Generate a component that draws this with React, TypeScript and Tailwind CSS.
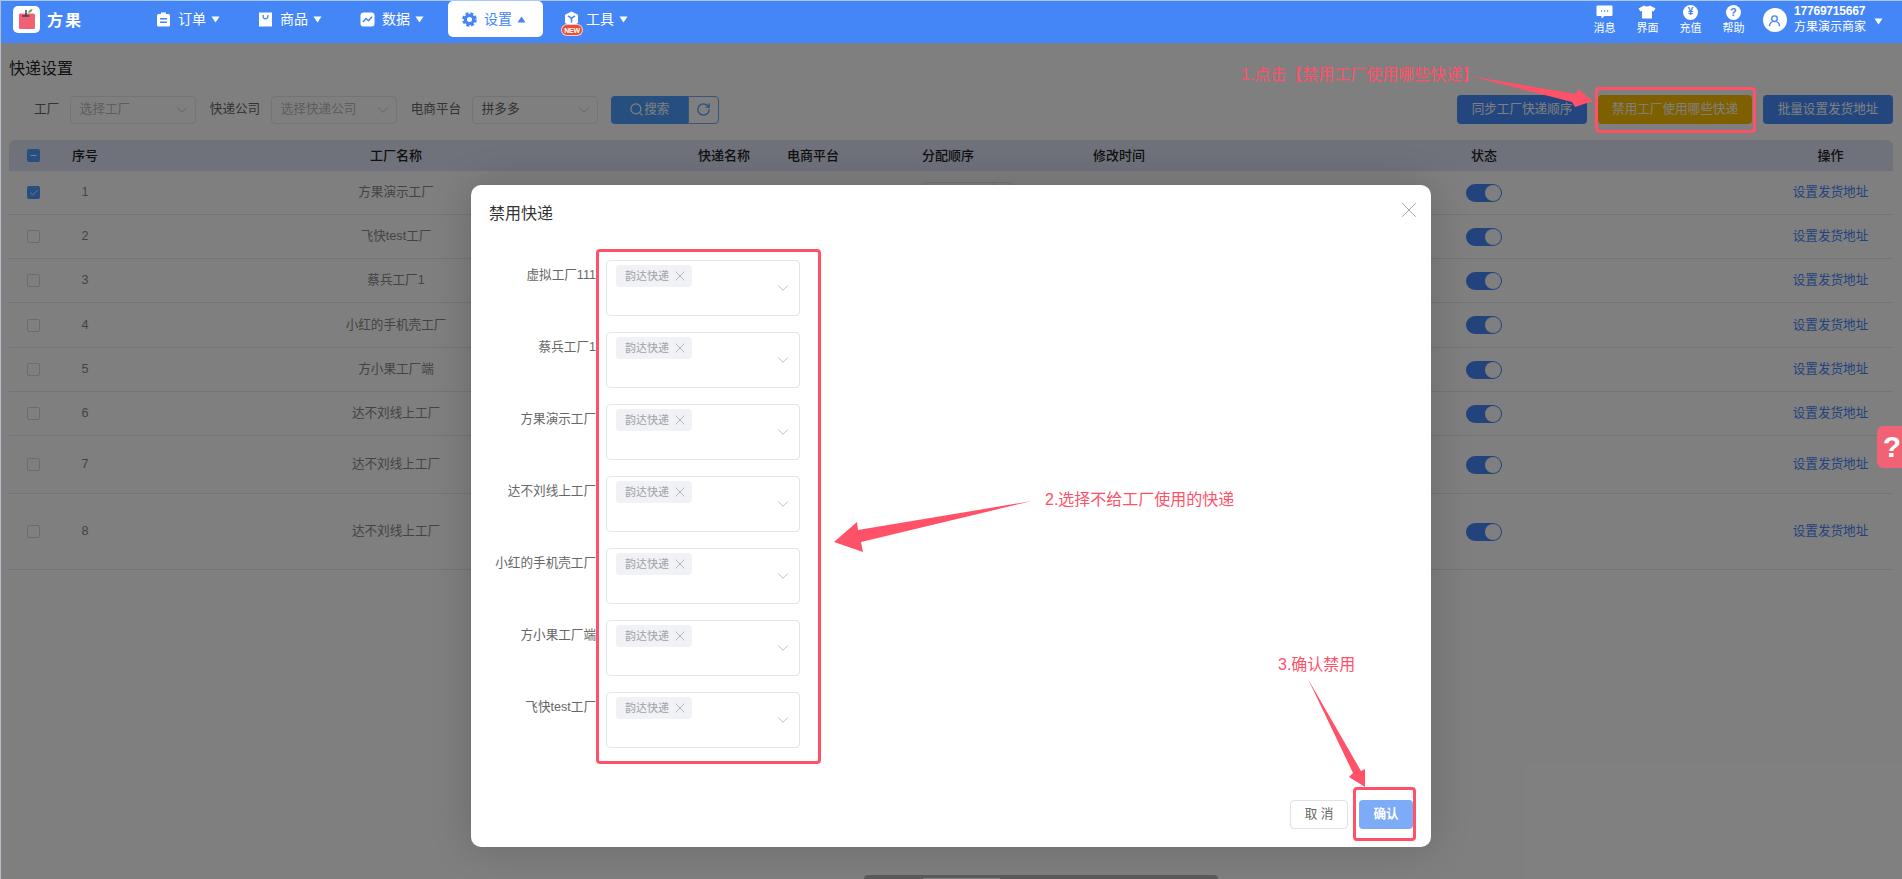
import { ChevronDown, X, Search, RotateCw, Check, Minus } from "lucide-react"

const rows = [
  { no: 1, name: "方果演示工厂", h: "h-[44px]", checked: true },
  { no: 2, name: "飞快test工厂", h: "h-[44px]" },
  { no: 3, name: "蔡兵工厂1", h: "h-[44px]" },
  { no: 4, name: "小红的手机壳工厂", h: "h-[45px]" },
  { no: 5, name: "方小果工厂端", h: "h-[44px]" },
  { no: 6, name: "达不刘线上工厂", h: "h-[44px]" },
  { no: 7, name: "达不刘线上工厂", h: "h-[58px]" },
  { no: 8, name: "达不刘线上工厂", h: "h-[76px]" },
]

const banned = ["虚拟工厂111", "蔡兵工厂1", "方果演示工厂", "达不刘线上工厂", "小红的手机壳工厂", "方小果工厂端", "飞快test工厂"]

const cols = "grid grid-cols-[49px_54px_568px_88px_90px_180px_162px_568px_125px]"

function Caret({ up, className = "" }: { up?: boolean; className?: string }) {
  return (
    <svg viewBox="0 0 9 7" className={`w-[9px] h-[7px] ${className}`} fill="currentColor">
      <path d={up ? "M4.5 0.5 L8.5 6.5 L0.5 6.5 Z" : "M0.5 0.5 L8.5 0.5 L4.5 6.5 Z"} />
    </svg>
  )
}

function OrderIcon() {
  return (
    <svg viewBox="0 0 15 15" className="size-[15px]" fill="white">
      <path fillRule="evenodd" d="M5 0.5 H10 V2 H12.5 Q14 2 14 3.5 V13 Q14 14.5 12.5 14.5 H2.5 Q1 14.5 1 13 V3.5 Q1 2 2.5 2 H5 Z M4 6 V7.5 H11 V6 Z M4 9.5 V11 H11 V9.5 Z" />
    </svg>
  )
}

function GoodsIcon() {
  return (
    <svg viewBox="0 0 15 15" className="size-[15px]" fill="white">
      <path fillRule="evenodd" d="M1 0.5 H14 V14.5 H1 Z M4.5 3 V4.5 C4.5 8.5 10.5 8.5 10.5 4.5 V3 H9.2 V4.5 C9.2 6.8 5.8 6.8 5.8 4.5 V3 Z" />
    </svg>
  )
}

function DataIcon() {
  return (
    <svg viewBox="0 0 15 15" className="size-[15px]">
      <rect x="0.5" y="0.5" width="14" height="14" rx="3" fill="white" />
      <path d="M3 10 L6 6.5 L8.5 8.8 L12 4.8" fill="none" stroke="#4586f7" strokeWidth="1.5" />
    </svg>
  )
}

function GearIcon() {
  return (
    <svg viewBox="0 0 16 16" className="size-[15px]" fill="none" stroke="#4586f7">
      <circle cx="8" cy="8" r="4.4" strokeWidth="3.4" />
      <circle cx="8" cy="8" r="6.6" strokeWidth="2.4" strokeDasharray="3.2 2" />
    </svg>
  )
}

function ToolIcon() {
  return (
    <svg viewBox="0 0 15 16" className="w-[15px] h-[16px]">
      <path d="M7.5 0.5 L14 3.8 V12 L7.5 15.5 L1 12 V3.8 Z" fill="white" />
      <path d="M4 4.8 L7.5 7.4 L11 4.8 M7.5 7.4 V11.5" fill="none" stroke="#4586f7" strokeWidth="1.5" />
    </svg>
  )
}

function NavItem({ icon, label, active, badge }: { icon: React.ReactNode; label: string; active?: boolean; badge?: boolean }) {
  return (
    <div className={`relative w-[95px] h-[36px] pl-[14px] flex items-center rounded-[5px] ${active ? "bg-white text-[#4586f7]" : "text-white"}`}>
      <span className="w-[15px] flex justify-center">{icon}</span>
      <span className="ml-[7px] text-[14px] leading-[20px]">{label}</span>
      <Caret up={active} className="ml-[5px]" />
      {badge && (
        <span className="absolute left-[11px] top-[23px] w-[22px] h-[12px] rounded-full bg-[#e8503a] border border-white/70 flex items-center justify-center text-[7px] leading-none font-bold text-white tracking-[-0.2px]">
          NEW
        </span>
      )}
    </div>
  )
}

function ToolLink({ icon, label }: { icon: React.ReactNode; label: string }) {
  return (
    <div className="w-[43px] flex flex-col items-center pt-[4px] text-white">
      <span className="h-[14px] flex items-center">{icon}</span>
      <span className="mt-[3px] text-[11px] leading-[13px]">{label}</span>
    </div>
  )
}

function Header() {
  return (
    <header className="relative z-30 h-[43px] shrink-0 border-t border-[#a9c8fb] bg-[#4586f7] flex items-start pl-[13px] pr-[19px]">
      <div className="mt-[5px] size-[27px] rounded-[5px] bg-white flex items-center justify-center">
        <svg viewBox="0 0 27 27" className="size-[27px]">
          <rect x="6" y="7.5" width="16" height="15.5" rx="1.5" fill="#f26073" />
          <path d="M9 10 H16.5 M13 4 V10" stroke="#3c4650" strokeWidth="1.5" fill="none" />
          <path d="M15 7 Q15.5 3.5 19.5 3 Q19.5 6.5 15 7 Z" fill="#63b04a" />
        </svg>
      </div>
      <span className="ml-[7px] mt-[9px] w-[36px] text-[16px] leading-[22px] font-bold text-white tracking-[2px]">方果</span>
      <nav className="ml-[59px] flex gap-[7px]">
        <NavItem icon={<OrderIcon />} label="订单" />
        <NavItem icon={<GoodsIcon />} label="商品" />
        <NavItem icon={<DataIcon />} label="数据" />
        <NavItem icon={<GearIcon />} label="设置" active />
        <NavItem icon={<ToolIcon />} label="工具" badge />
      </nav>
      <div className="ml-auto flex">
        <ToolLink
          label="消息"
          icon={
            <svg viewBox="0 0 17 14" className="w-[17px] h-[14px]">
              <path d="M1.5 0.5 H15.5 Q16.5 0.5 16.5 1.5 V10 Q16.5 11 15.5 11 H8.5 L5.5 13.5 V11 H1.5 Q0.5 11 0.5 10 V1.5 Q0.5 0.5 1.5 0.5 Z" fill="white" />
              <path d="M5 6 H6.2 M8 6 H9.2 M11 6 H12.2" stroke="#4586f7" strokeWidth="1.3" />
            </svg>
          }
        />
        <ToolLink
          label="界面"
          icon={
            <svg viewBox="0 0 18 14" className="w-[18px] h-[14px]">
              <path d="M6 0.5 Q9 2.5 12 0.5 L17.5 3.5 L15.5 6.5 L14 5.8 V13.5 H4 V5.8 L2.5 6.5 L0.5 3.5 Z" fill="white" />
            </svg>
          }
        />
        <ToolLink
          label="充值"
          icon={
            <span className="size-[15px] rounded-full bg-white flex items-center justify-center text-[10px] leading-none font-bold text-[#4586f7]">¥</span>
          }
        />
        <ToolLink
          label="帮助"
          icon={
            <span className="size-[15px] rounded-full bg-white flex items-center justify-center text-[11px] leading-none font-bold text-[#4586f7]">?</span>
          }
        />
      </div>
      <div className="ml-[8px] mt-[7px] size-[24px] rounded-full bg-white flex items-center justify-center">
        <svg viewBox="0 0 14 14" className="size-[13px]" fill="none" stroke="#4586f7" strokeWidth="1.5">
          <circle cx="7" cy="5" r="3" />
          <path d="M1.5 13 Q2 9 5 8.5 M12.5 13 Q12 9 9 8.5" />
        </svg>
      </div>
      <div className="ml-[7px] mt-[3px] text-white">
        <div className="text-[12px] leading-[15px] font-bold tracking-[-0.2px]">17769715667</div>
        <div className="text-[12px] leading-[17px]">方果演示商家</div>
      </div>
      <Caret className="ml-[8px] mt-[17px] text-white" />
    </header>
  )
}

function FilterSelect({ label, value, placeholder, labelClass }: { label: string; value: string; placeholder?: boolean; labelClass: string }) {
  return (
    <>
      <span className={`text-[12.6px] text-[#666] mr-[10.6px] ${labelClass}`}>{label}</span>
      <div className="w-[126px] h-[28px] rounded-[4px] border border-[#e6e8ee] pl-[9px] pr-[4px] flex items-center justify-between">
        <span className={`text-[12.6px] ${placeholder ? "text-[#bbb]" : "text-[#666]"}`}>{value}</span>
        <ChevronDown className="size-[18px] text-[#bbb]" strokeWidth={1.1} />
      </div>
    </>
  )
}

function Checkbox({ checked, partial }: { checked?: boolean; partial?: boolean }) {
  if (checked || partial) {
    return (
      <span className="size-[13px] rounded-[2px] bg-[#4c9eff] flex items-center justify-center text-white">
        {partial ? <Minus className="size-[9px]" strokeWidth={3} /> : <Check className="size-[10px]" strokeWidth={2} />}
      </span>
    )
  }
  return <span className="size-[13px] rounded-[2px] border border-[#d5d8e0]" />
}

function Toggle() {
  return (
    <span className="w-[36px] h-[18px] rounded-full bg-[#4586f7] flex items-center justify-end pr-[1px]">
      <span className="size-[16px] rounded-full bg-white" />
    </span>
  )
}

function Table() {
  return (
    <div className="mt-[16px] text-[12.6px]">
      <div className={`${cols} h-[31px] rounded-t-[6px] bg-[#dee4f6] items-center text-center text-[13px] font-medium text-[#222]`}>
        <span className="flex justify-center"><Checkbox partial /></span>
        <span>序号</span>
        <span>工厂名称</span>
        <span>快递名称</span>
        <span>电商平台</span>
        <span>分配顺序</span>
        <span>修改时间</span>
        <span>状态</span>
        <span>操作</span>
      </div>
      {rows.map((r) => (
        <div key={r.no} className={`${cols} ${r.h} border-b border-[#e6e9f3] items-center text-center text-[#888]`}>
          <span className="flex justify-center"><Checkbox checked={r.checked} /></span>
          <span>{r.no}</span>
          <span>{r.name}</span>
          <span />
          <span />
          <span className="flex pl-[65px]">
            <span className="w-[89px] h-[22px] rounded-[3px] border border-[#e0e3ea] flex justify-end">
              <span className="w-[19px] border-l border-[#e0e3ea]" />
            </span>
          </span>
          <span />
          <span className="flex justify-center"><Toggle /></span>
          <span className="text-[#4586f7]">设置发货地址</span>
        </div>
      ))}
    </div>
  )
}

function Dialog() {
  return (
    <div className="w-[960px] h-[662px] rounded-[10px] bg-white flex flex-col shadow-[0_0_40px_rgba(0,0,0,0.18)]">
      <div className="pl-[18px] pr-[9px] pt-[17px] flex justify-between">
        <span className="text-[16px] leading-[24px] text-[#333]">禁用快递</span>
        <X className="size-[26px] mt-[-5px] text-[#999]" strokeWidth={0.8} />
      </div>
      <div className="mt-[34px] flex flex-col gap-[16px]">
        {banned.map((name) => (
          <div key={name} className="flex">
            <label className="w-[125px] mr-[10px] text-right text-[12.6px] leading-[30px] text-[#666] whitespace-nowrap">{name}</label>
            <div className="w-[194px] h-[56px] rounded-[4px] border border-[#e3e4ec] pl-[9px] pr-[7px] flex justify-between">
              <span className="mt-[4px] w-[76px] h-[22px] rounded-[4px] bg-[#f0f2f5] flex items-center pl-[9px] gap-[3px] text-[11px] text-[#a0a2a8]">
                韵达快递
                <X className="size-[16px] text-[#999]" strokeWidth={1} />
              </span>
              <ChevronDown className="size-[18px] self-center text-[#aaa]" strokeWidth={1} />
            </div>
          </div>
        ))}
      </div>
      <div className="mt-auto pb-[18px] pr-[18px] flex justify-end gap-[11px]">
        <button className="w-[58px] h-[29px] rounded-[4px] border border-[#e0e1ea] text-[12.6px] text-[#666]">取 消</button>
        <button className="w-[54px] h-[29px] rounded-[4px] bg-[#7dabf8] text-[12.6px] font-bold text-white">确认</button>
      </div>
    </div>
  )
}

// 教程标注：箭头、红框、说明文字
function Annotations() {
  return (
    <div className="absolute inset-0 z-40 pointer-events-none text-[#ff5168]">
      <svg viewBox="0 0 1902 879" className="absolute inset-0 w-[1902px] h-[879px]" fill="#ff5168">
        <path d="M1470 76 L1576 94 L1578 89 L1593 101 L1575 107 L1572 102 Z" />
        <path d="M1032 501 L858 530 L857 522 L834 542 L863 552 L861 542 Z" />
        <path d="M1308 679 L1353 773 L1349 777 L1365 787 L1365 769 L1361 771 Z" />
      </svg>
      <div className="absolute left-[1595px] top-[87px] w-[161px] h-[46px] rounded-[4px] border-[3px] border-[#ff5168]" />
      <div className="absolute left-[596px] top-[249px] w-[225px] h-[515px] rounded-[4px] border-[3px] border-[#ff5168]" />
      <div className="absolute left-[1353px] top-[787px] w-[63px] h-[54px] rounded-[4px] border-[3px] border-[#ff5168]" />
      <span className="absolute left-[1241px] top-[64px] text-[16px] leading-[22px]">1.点击【禁用工厂使用哪些快递】</span>
      <span className="absolute left-[1045px] top-[489px] text-[16px] leading-[22px]">2.选择不给工厂使用的快递</span>
      <span className="absolute left-[1278px] top-[654px] text-[16px] leading-[22px]">3.确认禁用</span>
    </div>
  )
}

export default function App() {
  return (
    <div className="relative w-[1902px] h-[879px] overflow-hidden bg-white font-['Liberation_Sans','Noto_Sans_CJK_SC',sans-serif] flex flex-col">
      <Header />
      <main className="flex-1 px-[9px] pt-[14px]">
        <h1 className="text-[16px] leading-[24px] text-[#222]">快递设置</h1>
        <div className="mt-[14px] h-[29px] flex items-center">
          <FilterSelect label="工厂" value="选择工厂" placeholder labelClass="ml-[25px]" />
          <FilterSelect label="快递公司" value="选择快递公司" placeholder labelClass="ml-[14px]" />
          <FilterSelect label="电商平台" value="拼多多" labelClass="ml-[14px]" />
          <button className="ml-[13px] w-[77px] h-[28px] rounded-l-[4px] bg-[#4c9eff] flex items-center justify-center text-[12.6px] text-white">
            <Search className="size-[15px]" strokeWidth={2} />
            搜索
          </button>
          <button className="w-[31px] h-[28px] rounded-r-[4px] border border-[#7ea5f0] flex items-center justify-center text-[#4c9eff]">
            <RotateCw className="size-[15px]" strokeWidth={2} />
          </button>
          <div className="ml-auto flex gap-[11px] text-[12.6px] text-white">
            <button className="w-[130px] h-[29px] rounded-[4px] bg-[#468cff]">同步工厂快递顺序</button>
            <button className="w-[154px] h-[29px] rounded-[4px] bg-[#ffc000]">禁用工厂使用哪些快递</button>
            <button className="w-[130px] h-[29px] rounded-[4px] bg-[#468cff]">批量设置发货地址</button>
          </div>
        </div>
        <Table />
      </main>
      <div className="absolute inset-x-0 top-[43px] bottom-0 z-20 bg-black/50 flex justify-center items-start pt-[142px]">
        <Dialog />
      </div>
      <div className="absolute right-0 top-[426px] z-30 w-[25px] h-[42px] pl-[5px] rounded-l-[6px] bg-[#f06274] overflow-hidden text-center text-[30px] leading-[42px] font-bold text-white">?</div>
      <div className="absolute left-[864px] bottom-0 z-30 w-[354px] h-[4px] rounded-t-[6px] bg-[#5a5a5a]">
        <div className="ml-[59px] mt-[3px] w-[77px] h-[1px] bg-[#808080]" />
      </div>
      <div className="absolute left-0 inset-y-0 z-50 w-px bg-[#b4bccb]" />
      <Annotations />
    </div>
  )
}
